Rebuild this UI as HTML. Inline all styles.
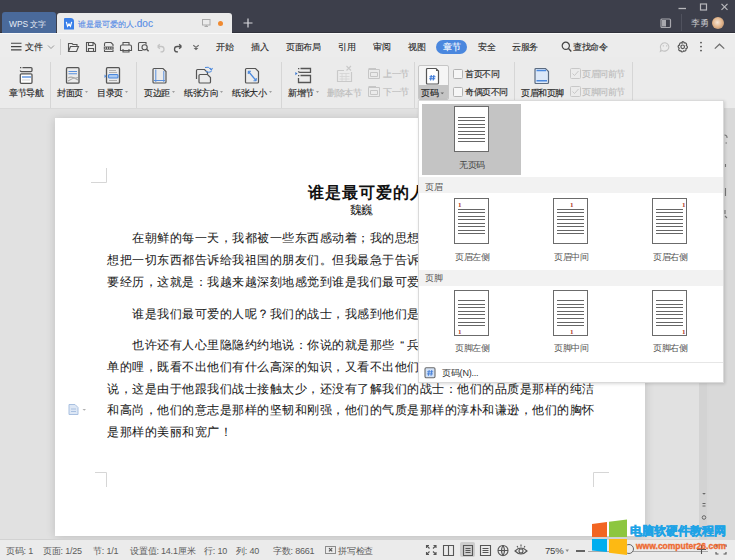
<!DOCTYPE html>
<html><head><meta charset="utf-8">
<style>
*{box-sizing:border-box;margin:0;padding:0}
html,body{width:735px;height:560px;overflow:hidden;background:#dedede;font-family:"Liberation Sans",sans-serif;color:#333}
.a{position:absolute;white-space:nowrap}
#title{left:0;top:0;width:735px;height:33px;background:#3d3f4b;border-bottom:1px solid #30313b}
#menubar{left:0;top:33px;width:735px;height:24px;background:#ececec;border-top:1px solid #f9f9f9}
#ribbon{left:0;top:57px;width:735px;height:52px;background:#ebebeb;border-bottom:1px solid #d9d9d9}
.mt{font-size:8.6px;letter-spacing:-0.3px;color:#2a2a2a;-webkit-text-stroke:0.12px #2a2a2a;top:41px;line-height:13px}
.rt{font-size:8.5px;letter-spacing:-0.5px;color:#262626;line-height:10px;-webkit-text-stroke:0.15px #262626}
.dis{color:#bcbcbc;-webkit-text-stroke:0.15px #bcbcbc}
.sep{width:1px;background:#d6d6d6}
#doc{left:0;top:109px;width:735px;height:431px;background:#e1e1e1}
#page{left:55px;top:118px;width:590px;height:418px;background:#fff;box-shadow:0 1px 9px rgba(0,0,0,.16)}
.bt{font-size:11.5px;letter-spacing:0.5px;line-height:14px;color:#1a1a1a;-webkit-text-stroke:0.05px #1a1a1a;left:107px}
#status{left:0;top:539px;width:735px;height:21px;background:#ebebeb;border-top:1px solid #d2d2d2}
.st{font-size:9px;letter-spacing:-0.2px;color:#5c5c5c;top:546px;line-height:10px}
#dd{left:418px;top:100px;width:306px;height:283px;background:#fff;border:1px solid #dadada;box-shadow:1px 1px 3px rgba(0,0,0,.15)}
.pg{position:absolute;width:35px;height:46px;border:1px solid #6b6b6b;background:#fff}
.ln{position:absolute;left:3px;width:27px;height:1px;background:#666}
.dl{font-size:9px;letter-spacing:-0.5px;color:#555;line-height:10px}
</style></head><body>
<div id="title" class="a"></div>
<!-- TITLE BAR -->
<div class="a" style="left:2px;top:12px;width:54px;height:21px;background:#4a6a9b;border-radius:3px 3px 0 0"></div>
<div class="a" style="left:9px;top:18px;font-size:8.4px;line-height:12px;color:#e6ecf5">WPS 文字</div>
<div class="a" style="left:57px;top:13px;width:175px;height:20px;background:#ebebeb;border-radius:3px 3px 0 0"></div>
<svg class="a" style="left:64px;top:18px" width="11" height="12"><path d="M0 1Q0 0 1 0H6.5Q10 0 10 3.5V11Q10 11.5 9.5 11.5H0.5Q0 11.5 0 11Z" fill="#3a7fe8"/><path d="M2.3 3.8L3.6 8.3L5 6L6.4 8.3L7.7 3.8" fill="none" stroke="#fff" stroke-width="1.2"/></svg>
<div class="a" style="left:78px;top:18px;font-size:8.3px;line-height:12px;color:#5a8ee6;-webkit-text-stroke:0.15px #5a8ee6">谁是最可爱的人<span style="font-size:10px">.doc</span></div>
<svg class="a" style="left:202px;top:19px" width="9" height="9"><rect x="0.5" y="0.5" width="7.5" height="5.5" fill="none" stroke="#aaa"/><line x1="4.25" y1="6" x2="4.25" y2="7.5" stroke="#aaa"/><line x1="2.5" y1="7.5" x2="6" y2="7.5" stroke="#aaa"/></svg>
<div class="a" style="left:218px;top:21px;width:5px;height:5px;border-radius:50%;background:#f08a30"></div>
<svg class="a" style="left:243px;top:18px" width="10" height="10"><path d="M5 0.5V9.5M0.5 5H9.5" stroke="#d8d8dc" stroke-width="1.2"/></svg>
<svg class="a" style="left:676px;top:1px" width="55" height="12"><path d="M2.5 7.5H10" stroke="#b8b8bc" stroke-width="1.3"/><rect x="24.5" y="3" width="6" height="6" fill="none" stroke="#b8b8bc" stroke-width="1.2"/><path d="M45.5 2.8L51.5 8.8M51.5 2.8L45.5 8.8" stroke="#b8b8bc" stroke-width="1.2"/></svg>
<svg class="a" style="left:660px;top:18px" width="12" height="11"><rect x="1" y="1" width="9.5" height="8.5" rx="1" fill="none" stroke="#a8a8ae" stroke-width="1.2"/><rect x="2" y="2" width="4" height="6.5" fill="#a8a8ae"/></svg>
<div class="a" style="left:681px;top:14px;width:1px;height:17px;background:#50525e"></div>
<div class="a" style="left:691px;top:17px;font-size:8.5px;line-height:12px;color:#c4c4c8">李勇</div>
<div class="a" style="left:712px;top:17px;width:12px;height:12px;border-radius:50%;background:radial-gradient(circle at 45% 45%,#f6e6d6 0,#e2b48a 50%,#9a7a60 100%)"></div>

<div id="menubar" class="a"></div>
<svg class="a" style="left:10px;top:42px" width="12" height="10"><path d="M1 1.3H11.5M1 4.6H11.5M1 7.9H11.5" stroke="#444" stroke-width="1.1"/></svg>
<div class="a mt" style="left:25px">文件</div>
<svg class="a" style="left:47px;top:44px" width="8" height="6"><path d="M1 1.5L4 4.5L7 1.5" fill="none" stroke="#999"/></svg>
<div class="a" style="left:60px;top:39px;width:1px;height:16px;background:#d0d0d0"></div>
<svg class="a" style="left:66px;top:40px" width="135" height="14" fill="none" stroke="#555" stroke-width="1.1">
 <path d="M2.5 11.5V3.5H6L7 4.5H11V6.5M2.5 11.5L4.5 6.5H12.5L10.5 11.5Z"/>
 <path d="M20.5 2.5H27.5L29.5 4.5V11.5H20.5Z M22.5 2.5V5.5H27V2.5 M22.5 11.5V8.5H27.5V11.5"/>
 <path d="M40 2.5H45L47 4.5V6 M38.5 10V11.5H47V10 M38.5 6V4Q38.5 2.5 40 2.5"/><path d="M37.8 6.5H47.6V9.6H37.8Z" fill="#555" stroke="none"/><path d="M39.3 7.3V8.9M41.5 7.3V8.9M43.7 7.3V8.9M45.9 7.3V8.9" stroke="#eee" stroke-width="0.8"/>
 <path d="M54.5 6.5Q54.5 5 56 5H64Q65.5 5 65.5 6.5V10.5H54.5Z M57 5V2.5H63V5 M57 9V12H63V9"/>
 <path d="M76.5 10.5H72.5V3.5Q72.5 2.5 73.5 2.5H80V4.5"/><circle cx="78.6" cy="7.3" r="2.6"/><path d="M80.6 9.3L82.6 11.3" stroke-width="1.4"/>
 <path d="M91.5 6.5H95.3A2.7 2.7 0 0 1 95.3 11.9H94.5 M91.5 6.5L93.8 4.2M91.5 6.5L93.8 8.8" stroke="#c4c4c4" stroke-width="1.3"/>
 <path d="M115.5 6.5H111.2A2.7 2.7 0 0 0 111.2 11.9H112 M115.5 6.5L113.2 4.2M115.5 6.5L113.2 8.8" stroke-width="1.3"/>
 <path d="M127.3 5.2L130 7.4L132.7 5.2" stroke="#666"/><path d="M127.6 8H132.4L130 10.3Z" fill="#666" stroke="none"/>
</svg>
<div class="a mt" style="left:216px">开始</div>
<div class="a mt" style="left:251px">插入</div>
<div class="a mt" style="left:286px">页面布局</div>
<div class="a mt" style="left:338px">引用</div>
<div class="a mt" style="left:373px">审阅</div>
<div class="a mt" style="left:408px">视图</div>
<div class="a" style="left:436px;top:40px;width:31px;height:14px;border-radius:7px;background:#4a87de"></div>
<div class="a mt" style="left:443px;color:#fff;-webkit-text-stroke:0.12px #fff">章节</div>
<div class="a mt" style="left:478px">安全</div>
<div class="a mt" style="left:512px">云服务</div>
<svg class="a" style="left:561px;top:41px" width="11" height="12"><circle cx="4.8" cy="4.8" r="3.6" fill="none" stroke="#444" stroke-width="1.2"/><path d="M7.5 7.5L10.3 10.5" stroke="#444" stroke-width="1.3"/></svg>
<div class="a mt" style="left:573px">查找命令</div>
<svg class="a" style="left:658px;top:40px" width="70" height="14" fill="none">
 <path d="M7 2.8A4.6 4.2 0 1 1 4 10.6L2.4 11.4L3 9.2A4.6 4.2 0 0 1 7 2.8Z" stroke="#c2c2c2" stroke-width="1.1"/><path d="M5.3 5.3V6.6M8.7 5.3V6.6" stroke="#c2c2c2" stroke-width="1.1"/>
 <circle cx="24.7" cy="6.8" r="1.8" stroke="#555" stroke-width="1.2"/>
 <path d="M24.7 1.6Q26 1.6 26.3 2.9Q27.6 2.5 28.3 3.5Q29 4.6 28.3 5.5Q29.5 6.2 29.4 7.3Q29.2 8.5 28 8.7Q28.4 10 27.5 10.8Q26.5 11.5 25.6 10.9Q25.2 12 24.1 12Q23 11.8 22.8 10.7Q21.6 11.1 20.9 10.1Q20.4 9 21.2 8.2Q20 7.5 20.1 6.4Q20.3 5.3 21.5 5.1Q21.2 3.9 22.1 3.1Q23.1 2.5 24 3.1Q24 1.6 24.7 1.6Z" stroke="#555" stroke-width="1.2"/>
 <circle cx="43" cy="2.6" r="0.95" fill="#555"/><circle cx="43" cy="6.6" r="0.95" fill="#555"/><circle cx="43" cy="10.6" r="0.95" fill="#555"/>
 <path d="M56.8 8.6L61.5 4.2L66.2 8.6" stroke="#707070" stroke-width="1.3"/>
</svg>

<div id="ribbon" class="a"></div>
<!-- RIBBON -->
<div class="a sep" style="left:50px;top:62px;height:46px"></div>
<div class="a sep" style="left:136px;top:62px;height:46px"></div>
<div class="a sep" style="left:281px;top:62px;height:46px"></div>
<div class="a sep" style="left:414px;top:62px;height:46px"></div>
<div class="a sep" style="left:514px;top:62px;height:46px"></div>
<div class="a sep" style="left:632px;top:62px;height:46px"></div>
<svg class="a" style="left:0;top:62px" width="735" height="26" fill="none" stroke="#555" stroke-width="1.1">
 <!-- 章节导航 -->
 <path d="M22.5 5.6H31Q32 5.6 32 6.6V8.6Q32 9.6 31 9.6H21.5Q20.3 9.6 20.3 8.6" stroke-width="1.3"/><path d="M20 5H21.3V6.3H20Z" fill="#555" stroke="none"/><path d="M21.5 11.8H31Q32 11.8 32 12.8V20.3Q32 21.3 31 21.3H21.3Q20.3 21.3 20.3 20.3V12.8Q20.3 11.8 21.5 11.8Z" fill="#fff" stroke-width="1.3"/><path d="M22 15H31" stroke="#5a90dd" stroke-width="1.4"/><path d="M22 18H30" stroke="#c8c8c8" stroke-width="0.8"/>
 <!-- 封面页 -->
 <rect x="66.5" y="5.7" width="12.5" height="15.5" rx="1" stroke="#555" stroke-width="1.3"/><path d="M68.5 9.5H77M68.5 11.8H77" stroke="#5a90dd" stroke-width="1.1"/><path d="M68 16Q72 13.5 78 18M68 19Q73 15.5 78 15.5" stroke="#aaa"/>
 <!-- 目录页 -->
 <rect x="106.5" y="5.7" width="13" height="15.5" rx="1" stroke="#555" stroke-width="1.3"/><path d="M109 8.5H116M109 10.5H117M109 18.5H117" stroke="#b0b0b0"/><rect x="108.5" y="12.5" width="9.5" height="3.5" rx="1" fill="#a9c8f0" stroke="#4a88dd"/><path d="M104.5 12.5L106.5 14.2L104.5 15.9Z" fill="#4a88dd" stroke="none"/>
 <!-- 页边距 -->
 <path d="M154 6.5H163L166 9.5V20Q166 21 165 21H154Q153 21 153 20V7.5Q153 6.5 154 6.5Z" stroke="#555" stroke-width="1.2"/><path d="M155.8 7.5V20M163.8 9V20M154 18.5H165" stroke="#5a90dd" stroke-width="1"/>
 <!-- 纸张方向 -->
 <path d="M196.5 17V8.5Q196.5 7.5 197.5 7.5H204.5L207.5 10.5V12" stroke="#555" stroke-width="1.2"/>
 <path d="M200 12.5H207.5L210.5 15.5V20Q210.5 21 209.5 21H200Q199 21 199 20V13.5Q199 12.5 200 12.5Z" stroke="#555" stroke-width="1.2" fill="#ebebeb"/>
 <path d="M205 5.5Q208.5 4 211 7.5M211.5 9.5Q209 11 206 9.5" stroke="#4a88dd" stroke-width="1"/><path d="M210 6L211.3 8L212.5 6" stroke="#4a88dd"/>
 <!-- 纸张大小 -->
 <path d="M246.5 6.5H255.5L258.5 9.5V20Q258.5 21 257.5 21H246.5Q245.5 21 245.5 20V7.5Q245.5 6.5 246.5 6.5Z" stroke="#555" stroke-width="1.2"/><path d="M248.5 9.5L256 18.5" stroke="#4a88dd" stroke-width="1.2"/><path d="M248.3 9.3V12M248.3 9.3H251M256.2 18.7V16M256.2 18.7H253.5" stroke="#4a88dd"/>
 <!-- 新增节 -->
 <path d="M300.5 6.5H310.5V10.3H299.8Q298.5 10.3 298.5 9.3 M300.5 13.5H310.5V20.5H298.5V16" stroke-width="1.3"/><path d="M298 6H299.3V7.3H298Z M298 13H299.3V14.3H298Z" fill="#555" stroke="none"/><path d="M295.3 10L297.6 11.6L295.3 13.2Z" fill="#3a78d0" stroke="none"/>
 <!-- 删除本节 -->
 <path d="M337.5 8.5V19.5H351.5V10 M337.5 8.5H344" stroke="#c9c9c9" stroke-width="1.2"/><path d="M339.5 11.5H349.5M339.5 14.5H349.5M339.5 17H349.5M342 11.5V19M346 11.5V19" stroke="#d6d6d6" stroke-width="0.9"/><path d="M346.5 4L351 8.5M351 4L346.5 8.5" stroke="#c9c9c9" stroke-width="1.1"/>
</svg>
<svg class="a" style="left:366px;top:66px" width="16" height="32" fill="none" stroke="#c6c6c6">
 <path d="M2.5 3.5H13.5V12.5H2.5Z M4.5 6.5H11.5V10.5H4.5Z" /><path d="M2.5 2.8H10" stroke-width="1.6"/>
 <path d="M2.5 21.5H13.5V30.5H2.5Z M4.5 24.5H11.5V28.5H4.5Z" /><path d="M2.5 20.8H10" stroke-width="1.6"/>
</svg>
<div class="a rt" style="left:144px;top:88px">页边距</div>
<div class="a rt" style="left:9px;top:88px">章节导航</div>
<div class="a rt" style="left:57px;top:88px">封面页</div>
<div class="a rt" style="left:97px;top:88px">目录页</div>
<div class="a rt" style="left:184px;top:88px">纸张方向</div>
<div class="a rt" style="left:232px;top:88px">纸张大小</div>
<div class="a rt" style="left:288px;top:88px">新增节</div>
<div class="a rt dis" style="left:327px;top:88px">删除本节</div>
<div class="a rt dis" style="left:383px;top:69px">上一节</div>
<div class="a rt dis" style="left:383px;top:87px">下一节</div>
<svg class="a" style="left:0;top:90px" width="735" height="6" fill="#888">
 <path d="M85 1.3H88L86.5 2.8Z M125 1.3H128L126.5 2.8Z M172 1.3H175L173.5 2.8Z M220 1.3H223L221.5 2.8Z M269 1.3H272L270.5 2.8Z M316 1.3H319L317.5 2.8Z"/>
</svg>
<!-- 页码 button -->
<div class="a" style="left:418px;top:65px;width:31px;height:35px;border:1px solid #c6c6c6;border-radius:2px;background:#f5f5f5;overflow:hidden"><div style="position:absolute;left:0;top:19px;width:31px;height:16px;background:#c4c4c4"></div></div>
<svg class="a" style="left:425px;top:67px" width="16" height="18" fill="none">
 <path d="M2.5 1.5H11L13.5 4V16Q13.5 17 12.5 17H2.5Q1.5 17 1.5 16V2.5Q1.5 1.5 2.5 1.5Z" fill="#fff" stroke="#555" stroke-width="1.2"/><path d="M11 1.5L13.5 4H11Z" fill="#555"/>
 <path d="M6.3 8L5.6 13.5M8.9 8L8.2 13.5M4.5 9.8H10.5M4.2 11.8H10.2" stroke="#3a78d8" stroke-width="1.1"/>
</svg>
<div class="a rt" style="left:421px;top:88px">页码</div>
<svg class="a" style="left:440px;top:92px" width="5" height="3"><path d="M0.5 0.5H4L2.25 2.3Z" fill="#666"/></svg>
<svg class="a" style="left:452px;top:68px" width="12" height="30" fill="#f6f6f6" stroke="#b4b4b4">
 <rect x="1.5" y="1.5" width="9" height="9" rx="1"/><rect x="1.5" y="19.5" width="9" height="9" rx="1"/>
</svg>
<div class="a rt" style="left:465px;top:69px">首页不同</div>
<div class="a rt" style="left:465px;top:87px">奇偶页不同</div>
<!-- 页眉和页脚 -->
<svg class="a" style="left:533px;top:66px" width="18" height="20" fill="none">
 <path d="M3 2.5H12.5L15.5 5.5V16.5Q15.5 17.5 14.5 17.5H3Q2 17.5 2 16.5V3.5Q2 2.5 3 2.5Z" fill="#dce8f8" stroke="#5b6b80" stroke-width="1.2"/>
 <path d="M3.5 4.5H13M3.5 14.8H14" stroke="#4a88dd" stroke-width="1.4"/>
</svg>
<div class="a rt" style="left:521px;top:88px">页眉和页脚</div>
<svg class="a" style="left:570px;top:68px" width="12" height="30" fill="none" stroke="#c8c8c8">
 <rect x="0.5" y="0.5" width="10" height="10" rx="1"/><path d="M2.5 5.5L4.5 7.5L8.5 3"/>
 <rect x="0.5" y="18.5" width="10" height="10" rx="1"/><path d="M2.5 23.5L4.5 25.5L8.5 21"/>
</svg>
<div class="a rt dis" style="left:582px;top:69px">页眉同前节</div>
<div class="a rt dis" style="left:582px;top:87px">页脚同前节</div>

<div id="doc" class="a"></div>
<div id="page" class="a"></div>
<!-- PAGE CONTENT -->
<svg class="a" style="left:0;top:0" width="735" height="560" fill="none" stroke="#d6d6d6">
 <path d="M106.5 168V182.5H91"/>
 <path d="M95 472.5H106.5V487"/>
 <path d="M609 472.5H593.5V487"/>
</svg>
<div class="a" style="left:308px;top:183px;font-size:15.5px;letter-spacing:1px;line-height:20px;font-weight:bold;color:#111">谁是最可爱的人</div>
<div class="a" style="left:349.5px;top:203px;font-size:12px;letter-spacing:-1px;line-height:14px;color:#1a1a1a">魏巍</div>
<div class="a bt" style="left:132px;top:231px">在朝鲜的每一天，我都被一些东西感动着；我的思想感情的潮水，在放纵奔流着；我真</div>
<div class="a bt" style="top:253px">想把一切东西都告诉给我祖国的朋友们。但我最急于告诉你们的，是我思想感情的一段</div>
<div class="a bt" style="top:275px">要经历，这就是：我越来越深刻地感觉到谁是我们最可爱的人！</div>
<div class="a bt" style="left:132px;top:307px">谁是我们最可爱的人呢？我们的战士，我感到他们是最可爱的人。</div>
<div class="a bt" style="left:132px;top:338px">也许还有人心里隐隐约约地说：你说的就是那些<span style="display:inline-block;width:12.5px;letter-spacing:0;text-align:right;padding-right:3px">“</span>兵<span style="display:inline-block;width:12.5px;letter-spacing:0">”</span>吗？他们看来是很平凡、很简</div>
<div class="a bt" style="top:360px">单的哩，既看不出他们有什么高深的知识，又看不出他们有什么丰富的感情。我要</div>
<div class="a bt" style="top:382px">说，这是由于他跟我们战士接触太少，还没有了解我们的战士：他们的品质是那样的纯洁</div>
<div class="a bt" style="top:403px">和高尚，他们的意志是那样的坚韧和刚强，他们的气质是那样的淳朴和谦逊，他们的胸怀</div>
<div class="a bt" style="top:425px">是那样的美丽和宽广！</div>
<svg class="a" style="left:66px;top:403px" width="24" height="14" fill="none">
 <path d="M3 1.5H9L12 4.5V11.5H3Z" fill="#dde7f5" stroke="#a9c0e0"/><path d="M5 6H10M5 8.5H10" stroke="#a9c0e0"/>
 <path d="M16.5 6H20L18.25 7.8Z" fill="#b0b0b0"/>
</svg>

<div id="status" class="a"></div>

<!-- STATUS -->
<div class="a st" style="left:6px">页码: 1</div>
<div class="a st" style="left:43px">页面: 1/25</div>
<div class="a st" style="left:93px">节: 1/1</div>
<div class="a st" style="left:130px">设置值: 14.1厘米</div>
<div class="a st" style="left:204px">行: 10</div>
<div class="a st" style="left:236px">列: 40</div>
<div class="a st" style="left:273px">字数: 8661</div>
<svg class="a" style="left:325px;top:546px" width="12" height="10" fill="none" stroke="#8c8c8c"><rect x="0.5" y="0.5" width="10" height="7"/><path d="M4 2.2L7.2 5.4M7.2 2.2L4 5.4" stroke="#555" stroke-width="1.2"/></svg>
<div class="a st" style="left:338px">拼写检查</div>
<div class="a" style="left:460px;top:542px;width:15px;height:15px;border-radius:2px;background:#cdcdcd"></div>
<svg class="a" style="left:420px;top:543px" width="170" height="16" fill="none" stroke="#555" stroke-width="1.1">
 <path d="M6.5 5V2.5H9M13.5 2.5H16V5M16 9V11.5H13.5M9 11.5H6.5V9 M7 3L9.5 5.5M15.5 3L13 5.5M7 11L9.5 8.5M15.5 11L13 8.5"/>
 <path d="M23.5 2.5H33.5V12.5H23.5Z M28.5 2.5V12.5"/>
 <path d="M43.5 2.5H52.5V12.5H43.5Z M45.5 5.5H50.5M45.5 7.5H50.5M45.5 9.5H50.5"/>
 <path d="M60.5 2.5H70.5V12.5H60.5Z M62.5 5.5H68.5M62.5 7.5H68.5M62.5 9.5H68.5"/>
 <circle cx="83" cy="7.5" r="5"/><path d="M78 7.5H88M83 2.5Q80 7.5 83 12.5Q86 7.5 83 2.5"/>
 <path d="M95 8Q101 2 107 8Q101 14 95 8Z"/><circle cx="101" cy="8" r="2"/><path d="M97 3L98 4.5M101 1.5V3.5M105 3L104 4.5"/>
 <path d="M156 8H165" stroke-width="1.8"/>
</svg>
<div class="a st" style="left:545px;font-size:9.5px;color:#444">75%</div>
<svg class="a" style="left:565px;top:549px" width="5" height="4"><path d="M0.5 0.5H4L2.2 3Z" fill="#888"/></svg>
<div class="a" style="left:588px;top:551px;width:120px;height:1px;background:#aaa"></div>
<div class="a" style="left:624px;top:544px;width:10px;height:10px;border-radius:50%;border:1px solid #666;background:#ebebeb"></div>
<svg class="a" style="left:696px;top:543px" width="36" height="14" fill="none" stroke="#555" stroke-width="1.1"><path d="M5.5 2V11M1 6.5H10"/><path d="M20 4V2H22.5M27.5 2H30V4M30 9V11H27.5M22.5 11H20V9"/></svg>
<!-- scrollbar / right panel -->
<div class="a" style="left:699px;top:109px;width:10px;height:431px;background:#d3d3d3;border-right:2px solid #d8d8d8"></div>
<div class="a" style="left:709px;top:109px;width:26px;height:431px;background:#d9d9d9"></div>
<svg class="a" style="left:699px;top:488px" width="10" height="34" fill="#666"><path d="M3.2 5H6.8L5 6.8Z"/><path d="M3.5 15.5H6.5M3.5 18H6.5" stroke="#666"/><circle cx="5" cy="29.5" r="1.8" fill="none" stroke="#666"/></svg>
<svg class="a" style="left:724px;top:130px" width="11" height="220" fill="none" stroke="#777" stroke-width="1.1">
 <path d="M0.5 5A2.5 2.5 0 0 1 3 8 M1.5 13H3"/><path d="M1.5 34V37"/><path d="M1.5 58V66"/><path d="M1 80V84M1 86L3 88"/>
</svg>
<!-- WATERMARK -->
<svg class="a" style="left:590px;top:519px" width="40" height="38">
 <path d="M2 5L17 3V18H2Z" fill="#f26522"/>
 <path d="M19 2.7L37 0.5V18H19Z" fill="#8dc63f"/>
 <path d="M2 20H17V33L2 31.5Z" fill="#00aeef"/>
 <path d="M19 20H37V36L19 33.7Z" fill="#fdb913"/>
</svg>
<div class="a" style="left:630px;top:524px;font-size:12.2px;line-height:15px;font-weight:bold;color:#1fa3e6;-webkit-text-stroke:0.5px #1fa3e6">电脑软硬件教程网</div>
<div class="a" style="left:636px;top:540px;font-size:8.5px;line-height:12px;font-weight:bold;color:#ee6a32;-webkit-text-stroke:0.35px #ee6a32;font-family:'Liberation Sans',sans-serif">www.computer26.com</div>
<div id="dd" class="a"></div>
<!-- DROPDOWN -->
<div class="a" style="left:422px;top:104px;width:99px;height:71px;background:#c4c4c4"></div>
<div class="pg" style="left:454px;top:106px"><div class="ln" style="top:9.5px"></div><div class="ln" style="top:13px"></div><div class="ln" style="top:16.5px"></div><div class="ln" style="top:20px"></div><div class="ln" style="top:23.5px"></div><div class="ln" style="top:27px"></div><div class="ln" style="top:30.5px"></div><div class="ln" style="top:34px"></div></div>
<div class="a dl" style="left:459px;top:160px;color:#444">无页码</div>
<div class="a" style="left:419px;top:177px;width:304px;height:16px;background:#f2f2f2"></div>
<div class="a dl" style="left:425px;top:182px;color:#555">页眉</div>
<div class="pg" style="left:454px;top:198px"><div class="ln" style="top:9.5px"></div><div class="ln" style="top:13px"></div><div class="ln" style="top:16.5px"></div><div class="ln" style="top:20px"></div><div class="ln" style="top:23.5px"></div><div class="ln" style="top:27px"></div><div class="ln" style="top:30.5px"></div><div class="ln" style="top:34px"></div><div style="position:absolute;left:3px;top:2px;font-size:7px;line-height:8px;color:#b03a2a;font-family:Liberation Serif,serif;font-weight:bold">1</div></div><div class="pg" style="left:553px;top:198px"><div class="ln" style="top:9.5px"></div><div class="ln" style="top:13px"></div><div class="ln" style="top:16.5px"></div><div class="ln" style="top:20px"></div><div class="ln" style="top:23.5px"></div><div class="ln" style="top:27px"></div><div class="ln" style="top:30.5px"></div><div class="ln" style="top:34px"></div><div style="position:absolute;left:16px;top:2px;font-size:7px;line-height:8px;color:#b03a2a;font-family:Liberation Serif,serif;font-weight:bold">1</div></div><div class="pg" style="left:652px;top:198px"><div class="ln" style="top:9.5px"></div><div class="ln" style="top:13px"></div><div class="ln" style="top:16.5px"></div><div class="ln" style="top:20px"></div><div class="ln" style="top:23.5px"></div><div class="ln" style="top:27px"></div><div class="ln" style="top:30.5px"></div><div class="ln" style="top:34px"></div><div style="position:absolute;left:29px;top:2px;font-size:7px;line-height:8px;color:#b03a2a;font-family:Liberation Serif,serif;font-weight:bold">1</div></div>
<div class="a dl" style="left:455px;top:252px">页眉左侧</div>
<div class="a dl" style="left:554px;top:252px">页眉中间</div>
<div class="a dl" style="left:653px;top:252px">页眉右侧</div>
<div class="a" style="left:419px;top:270px;width:304px;height:16px;background:#f2f2f2"></div>
<div class="a dl" style="left:425px;top:273px;color:#555">页脚</div>
<div class="pg" style="left:454px;top:290px"><div class="ln" style="top:9px"></div><div class="ln" style="top:12.6px"></div><div class="ln" style="top:16.2px"></div><div class="ln" style="top:19.8px"></div><div class="ln" style="top:23.4px"></div><div class="ln" style="top:27px"></div><div class="ln" style="top:30.6px"></div><div class="ln" style="top:34.2px"></div><div style="position:absolute;left:3px;top:37px;font-size:7px;line-height:8px;color:#b03a2a;font-family:Liberation Serif,serif;font-weight:bold">1</div></div><div class="pg" style="left:553px;top:290px"><div class="ln" style="top:9px"></div><div class="ln" style="top:12.6px"></div><div class="ln" style="top:16.2px"></div><div class="ln" style="top:19.8px"></div><div class="ln" style="top:23.4px"></div><div class="ln" style="top:27px"></div><div class="ln" style="top:30.6px"></div><div class="ln" style="top:34.2px"></div><div style="position:absolute;left:16px;top:37px;font-size:7px;line-height:8px;color:#b03a2a;font-family:Liberation Serif,serif;font-weight:bold">1</div></div><div class="pg" style="left:652px;top:290px"><div class="ln" style="top:9px"></div><div class="ln" style="top:12.6px"></div><div class="ln" style="top:16.2px"></div><div class="ln" style="top:19.8px"></div><div class="ln" style="top:23.4px"></div><div class="ln" style="top:27px"></div><div class="ln" style="top:30.6px"></div><div class="ln" style="top:34.2px"></div><div style="position:absolute;left:29px;top:37px;font-size:7px;line-height:8px;color:#b03a2a;font-family:Liberation Serif,serif;font-weight:bold">1</div></div>
<div class="a dl" style="left:455px;top:343px">页脚左侧</div>
<div class="a dl" style="left:554px;top:343px">页脚中间</div>
<div class="a dl" style="left:653px;top:343px">页脚右侧</div>
<div class="a" style="left:419px;top:362px;width:304px;height:1px;background:#e6e6e6"></div>
<svg class="a" style="left:424px;top:367px" width="12" height="12" fill="none"><rect x="1" y="0.8" width="10" height="10" rx="1.2" fill="#d3e2f6" stroke="#6a6a6a" stroke-width="1.1"/><path d="M5.2 3L4.4 8.8M7.8 3L7 8.8M3.2 4.8H9.2M2.9 6.9H8.9" stroke="#3f7ad6" stroke-width="0.9"/></svg>
<div class="a dl" style="left:442px;top:368px;color:#333;letter-spacing:-0.2px">页码(N)...</div>

</body></html>
